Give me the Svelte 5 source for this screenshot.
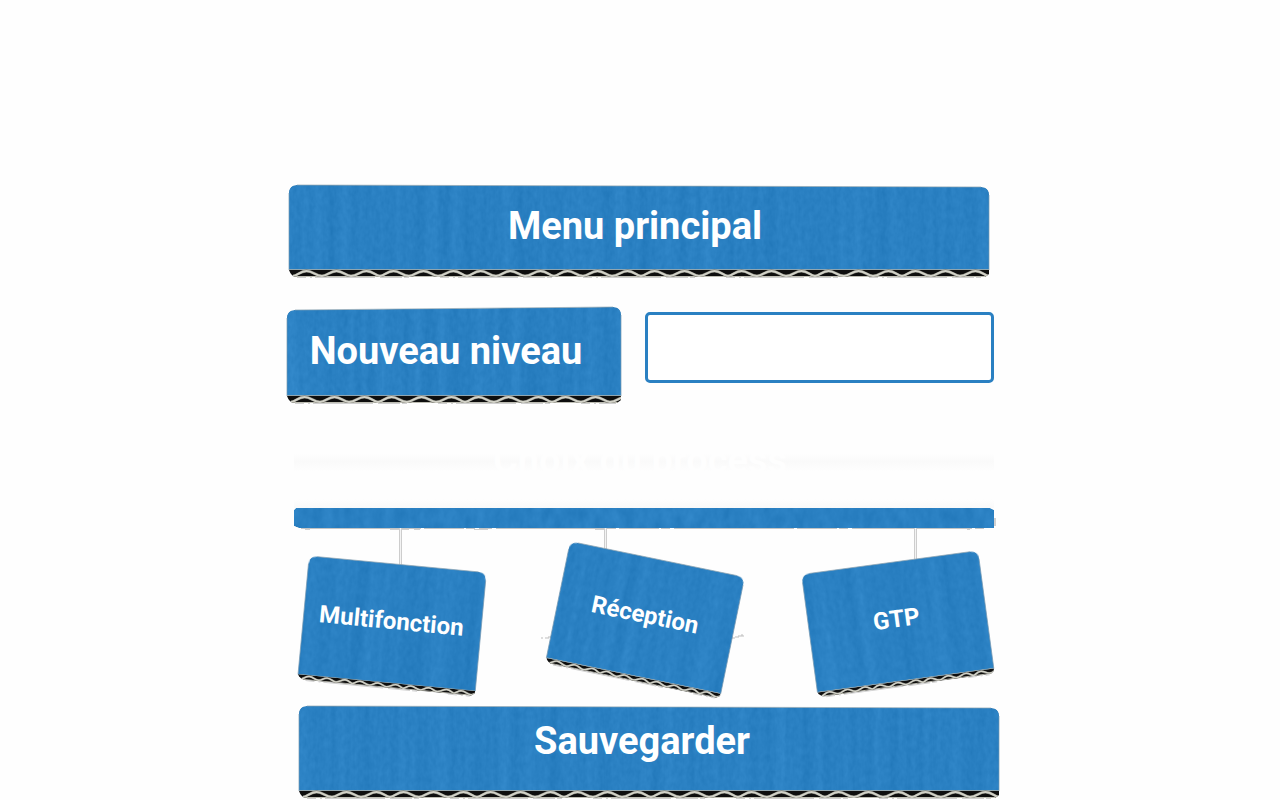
<script>
  let level = $state('');

  const plates = [
    { label: 'Multifonction', angle: 5.4, drop: 35, cord: 54, length: 40, scraps: false },
    { label: 'Réception', angle: 11.6, drop: 29, cord: 27, length: 22, scraps: true },
    { label: 'GTP', angle: -7.7, drop: 33, cord: 59, length: 34, scraps: false }
  ];

  // Outline of a cardboard face, with its upper corners at their own heights.
  function face(w, h, left, right, r) {
    return `M0 ${left + r}Q0 ${left} ${r} ${left}L${w - r} ${right}Q${w} ${right} ${w} ${right + r}V${h}H0Z`;
  }

  // Centre line of the fluting between the two paper layers.
  function flute(w, y, period, height) {
    let d = `M4 ${y + height}`;
    for (let x = 4, i = 0; x < w; x += period, i++) {
      const peak = x + period * 0.5 + (i % 3) - 1;
      const half = period * 0.32;
      d += `C${peak - half} ${y + height} ${peak - half * 0.7} ${y} ${peak} ${y}`;
      d += `S${peak + half} ${y + height} ${x + period} ${y + height}`;
    }
    return d;
  }
</script>

{#snippet board(w, h, left, right, period, band, seed)}
  <svg class="card-art" viewBox="0 0 {w} {h}" preserveAspectRatio="none" aria-hidden="true">
    <defs>
      <filter id="grain{seed}" x="0" y="0" width="1" height="1" color-interpolation-filters="sRGB">
        <feTurbulence type="fractalNoise" baseFrequency="0.08 0.002" numOctaves="2" seed={seed} />
        <feColorMatrix values="1 0 0 0 0 1 0 0 0 0 1 0 0 0 0 0 0 0 0 1" result="ribs" />
        <feTurbulence type="fractalNoise" baseFrequency="0.24 0.14" numOctaves="2" seed={seed + 9} />
        <feColorMatrix values="1 0 0 0 0 1 0 0 0 0 1 0 0 0 0 0 0 0 0 1" result="dust" />
        <feComposite in="SourceGraphic" in2="ribs" operator="arithmetic" k2="1" k3="0.07" k4="-0.035" />
        <feComposite in2="dust" operator="arithmetic" k2="1" k3="0.05" k4="-0.025" />
        <feComposite in2="SourceAlpha" operator="in" />
      </filter>
      <clipPath id="edge{seed}">
        <path d="M0 {h - band - 1}H{w}V{h - 4}L{w - 4} {h - 1}H7Q2 {h - 2} 0 {h - band}Z" />
      </clipPath>
    </defs>
    <path d={face(w, h - band, left, right, 8)} fill="#2a80c2" filter="url(#grain{seed})" />
    <path d="M8 {left}L{w - 8} {right}" fill="none" stroke="#8da3b0" stroke-width="0.7" />
    <path d="M{w} {right + 8}V{h - band}M0 {left + 8}V{h - band}" stroke="#7698b0" stroke-width="0.7" />
    <g clip-path="url(#edge{seed})">
      <rect y={h - band} width={w} height={band} fill="#0e0e0e" />
      <rect y={h - band - 1} width={w} height="1" fill="#8fa5b0" />
      <rect y={h - 2} width={w} height="1" fill="#bdbdb3" />
      <path d={flute(w, h - band + 1, period, band - 3)} fill="none" stroke="#77776f" stroke-width={band * 0.36} />
      <path d={flute(w, h - band + 1, period, band - 3)} fill="none" stroke="#d2d2c8" stroke-width={band * 0.24} />
    </g>
    <path d="M8 {h - 0.5}H{w - 5}" stroke="#d0d0d0" stroke-width="1" stroke-dasharray="9 4 2 3 60 5 22 2 5 31" />
  </svg>
{/snippet}

<main>
  <h1 class="title">
    <a class="board" href="#menu">
      {@render board(700, 94, 1, 3, 29, 8, 3)}
      <span class="text">Menu principal</span>
    </a>
  </h1>

  <div class="entry">
    <label class="board" for="level">
      {@render board(334, 98, 4, 1, 29, 8, 5)}
      <span class="text">Nouveau niveau</span>
    </label>
    <input id="level" type="text" bind:value={level} />
  </div>

  <section class="choice">
    <h2>Choix du process</h2>
    <div class="rail">
      <svg viewBox="0 0 700 22" preserveAspectRatio="none" aria-hidden="true">
        <defs>
          <filter id="railgrain" x="0" y="0" width="1" height="1" color-interpolation-filters="sRGB">
            <feTurbulence type="fractalNoise" baseFrequency="0.1 0.06" numOctaves="3" seed="4" />
            <feColorMatrix values="1 0 0 0 0 1 0 0 0 0 1 0 0 0 0 0 0 0 0 1" result="ribs" />
            <feComposite in="SourceGraphic" in2="ribs" operator="arithmetic" k2="1" k3="0.08" k4="-0.04" />
            <feComposite in2="SourceAlpha" operator="in" />
          </filter>
        </defs>
        <path d="M2 0H696L700 2V20H5L0 18V2Z" fill="#2a80c2" filter="url(#railgrain)" />
        <path d="M7 20.5H198M202 20.5H690" stroke="#c4c4c4" stroke-dasharray="120 3 40 2 9 4" />
        <path d="M11 21.5H16M96 21.5H115M120 21.5H126M180 21.5H194M301 21.5H311M673 21.5H676" stroke="#cfcfcf" />
        <path d="M701 10V18" stroke="#d0d0d0" stroke-width="2" />
      </svg>
    </div>
    <div class="plates">
      {#each plates as plate, i}
        <div class="hanger">
          <span class="cord" style="left: {plate.cord}%; height: {plate.length}px"></span>
          {#if plate.scraps}
            <svg class="scraps" viewBox="0 0 204 6" preserveAspectRatio="none" aria-hidden="true">
              <path d="M0 4H2M4 4H8M7 3H11M190 4H194M194 3H198M197 2H203M200 1H202" stroke="#bdbdbd" fill="none" />
            </svg>
          {/if}
          <button
            class="board plate"
            type="button"
            style="margin-top: {plate.drop}px; transform: rotate({plate.angle}deg)"
          >
            {@render board(178, 126, 1, 1, 17, 6, 20 + i)}
            <span class="text">{plate.label}</span>
          </button>
        </div>
      {/each}
    </div>
  </section>

  <button class="board save" type="button">
    {@render board(700, 94, 1, 3, 29, 8, 7)}
    <span class="text">Sauvegarder</span>
  </button>
</main>

<style>
  :global(body) {
    background: #fefefe;
  }

  main {
    box-sizing: border-box;
    width: 100%;
    max-width: 720px;
    margin: 0 auto;
    padding-top: 184px;
    font-family: Roboto, "Liberation Sans", sans-serif;
    font-size: 38px;
    font-weight: 700;
    line-height: 48px;
    color: #fff;
  }

  h1,
  h2 {
    margin: 0;
    font: inherit;
  }

  .board {
    display: grid;
    box-sizing: border-box;
    padding: 0;
    border: 0;
    background: none;
    font: inherit;
    color: inherit;
    text-align: center;
    text-decoration: none;
    cursor: pointer;
  }

  .card-art,
  .text {
    grid-area: 1 / 1;
  }

  .card-art {
    display: block;
    width: 100%;
    height: 100%;
    min-height: 0;
    overflow: visible;
  }

  .text {
    align-self: start;
    z-index: 1;
  }

  .title {
    margin: 0 11px 0 9px;
  }

  .title .board {
    grid-template-rows: 94px;
  }

  .title .text {
    padding: 18px 8px 0 0;
  }

  .entry {
    display: grid;
    grid-template-columns: 334fr 349fr;
    column-gap: 24px;
    align-items: start;
    margin: 28px 6px 0 7px;
  }

  .entry .board {
    grid-template-rows: 98px;
  }

  .entry .text {
    padding: 21px 16px 0 0;
  }

  input {
    box-sizing: border-box;
    width: 100%;
    height: 71px;
    margin-top: 6px;
    padding: 0 16px;
    border: 3px solid #2a80c2;
    border-radius: 5px;
    background: #fff;
    font: inherit;
    color: #2a80c2;
    outline: none;
  }

  .choice {
    margin: 32px 6px 0 14px;
  }

  h2 {
    height: 72px;
    padding-right: 8px;
    text-align: center;
    color: #fefefe;
    background:
      linear-gradient(#fefefe00, #f9f9f9) 0 100% / 100% 9px no-repeat,
      linear-gradient(#fefefe, #fafafa 50%, #fefefe) 0 17px / 100% 18px no-repeat;
  }

  .rail svg {
    display: block;
    width: 100%;
    height: 22px;
    overflow: visible;
  }

  .choice h2 {
    box-sizing: border-box;
  }

  .plates {
    display: flex;
    justify-content: space-between;
    padding: 0 7px 0 9px;
  }

  .hanger {
    position: relative;
    width: 178px;
    margin-top: -2px;
  }

  .cord {
    position: absolute;
    top: 0;
    box-sizing: border-box;
    width: 3px;
    border: solid #cdcdcd;
    border-width: 0 1px;
    background: #f3f3f3;
  }

  .scraps {
    position: absolute;
    top: 106px;
    left: -15px;
    width: 204px;
    height: 6px;
  }

  .plate {
    position: relative;
    width: 100%;
    grid-template-rows: 126px;
    font-size: 24px;
    line-height: 32px;
  }

  .plate .text {
    padding: 42px 2px 0 0;
  }

  .save {
    width: calc(100% - 20px);
    margin: 16px 0 0 19px;
    grid-template-rows: 94px;
  }

  .save .text {
    padding: 12px 14px 0 0;
  }
</style>
